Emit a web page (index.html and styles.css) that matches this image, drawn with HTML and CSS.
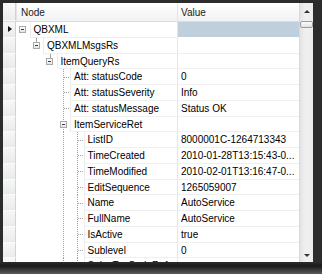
FILE: index.html
```html
<!DOCTYPE html>
<html lang="en">
<head>
    <meta charset="UTF-8">
    <title>QBXML Tree</title>
    <link rel="stylesheet" href="styles.css">
</head>
<body>
    <div class="window">
        <div class="grid">
            <div class="head">
                <div class="rowhead"></div>
                <div class="hcell node-col">Node</div>
                <div class="hcell value-col">Value</div>
            </div>

            <div class="row">
                <div class="rowhead current"><span class="arrow"></span></div>
                <div class="node-col tree">
                    <span class="guide"><span class="box"></span></span>
                    <span class="cell">QBXML</span>
                </div>
                <div class="value-col cell selected"></div>
            </div>
            <div class="row">
                <div class="rowhead"></div>
                <div class="node-col tree">
                    <span class="guide"></span>
                    <span class="guide up stub"><span class="box"></span></span>
                    <span class="cell">QBXMLMsgsRs</span>
                </div>
                <div class="value-col cell"></div>
            </div>
            <div class="row">
                <div class="rowhead"></div>
                <div class="node-col tree">
                    <span class="guide"></span>
                    <span class="guide"></span>
                    <span class="guide up stub"><span class="box"></span></span>
                    <span class="cell">ItemQueryRs</span>
                </div>
                <div class="value-col cell"></div>
            </div>
            <div class="row">
                <div class="rowhead"></div>
                <div class="node-col tree">
                    <span class="guide"></span>
                    <span class="guide"></span>
                    <span class="guide"></span>
                    <span class="guide pipe stub"></span>
                    <span class="cell">Att: statusCode</span>
                </div>
                <div class="value-col cell">0</div>
            </div>
            <div class="row">
                <div class="rowhead"></div>
                <div class="node-col tree">
                    <span class="guide"></span>
                    <span class="guide"></span>
                    <span class="guide"></span>
                    <span class="guide pipe stub"></span>
                    <span class="cell">Att: statusSeverity</span>
                </div>
                <div class="value-col cell">Info</div>
            </div>
            <div class="row">
                <div class="rowhead"></div>
                <div class="node-col tree">
                    <span class="guide"></span>
                    <span class="guide"></span>
                    <span class="guide"></span>
                    <span class="guide pipe stub"></span>
                    <span class="cell">Att: statusMessage</span>
                </div>
                <div class="value-col cell">Status OK</div>
            </div>
            <div class="row">
                <div class="rowhead"></div>
                <div class="node-col tree">
                    <span class="guide"></span>
                    <span class="guide"></span>
                    <span class="guide"></span>
                    <span class="guide pipe stub"><span class="box"></span></span>
                    <span class="cell">ItemServiceRet</span>
                </div>
                <div class="value-col cell"></div>
            </div>
            <div class="row">
                <div class="rowhead"></div>
                <div class="node-col tree">
                    <span class="guide"></span>
                    <span class="guide"></span>
                    <span class="guide"></span>
                    <span class="guide pipe"></span>
                    <span class="guide pipe stub"></span>
                    <span class="cell">ListID</span>
                </div>
                <div class="value-col cell">8000001C-1264713343</div>
            </div>
            <div class="row">
                <div class="rowhead"></div>
                <div class="node-col tree">
                    <span class="guide"></span>
                    <span class="guide"></span>
                    <span class="guide"></span>
                    <span class="guide pipe"></span>
                    <span class="guide pipe stub"></span>
                    <span class="cell">TimeCreated</span>
                </div>
                <div class="value-col cell">2010-01-28T13:15:43-0...</div>
            </div>
            <div class="row">
                <div class="rowhead"></div>
                <div class="node-col tree">
                    <span class="guide"></span>
                    <span class="guide"></span>
                    <span class="guide"></span>
                    <span class="guide pipe"></span>
                    <span class="guide pipe stub"></span>
                    <span class="cell">TimeModified</span>
                </div>
                <div class="value-col cell">2010-02-01T13:16:47-0...</div>
            </div>
            <div class="row">
                <div class="rowhead"></div>
                <div class="node-col tree">
                    <span class="guide"></span>
                    <span class="guide"></span>
                    <span class="guide"></span>
                    <span class="guide pipe"></span>
                    <span class="guide pipe stub"></span>
                    <span class="cell">EditSequence</span>
                </div>
                <div class="value-col cell">1265059007</div>
            </div>
            <div class="row">
                <div class="rowhead"></div>
                <div class="node-col tree">
                    <span class="guide"></span>
                    <span class="guide"></span>
                    <span class="guide"></span>
                    <span class="guide pipe"></span>
                    <span class="guide pipe stub"></span>
                    <span class="cell">Name</span>
                </div>
                <div class="value-col cell">AutoService</div>
            </div>
            <div class="row">
                <div class="rowhead"></div>
                <div class="node-col tree">
                    <span class="guide"></span>
                    <span class="guide"></span>
                    <span class="guide"></span>
                    <span class="guide pipe"></span>
                    <span class="guide pipe stub"></span>
                    <span class="cell">FullName</span>
                </div>
                <div class="value-col cell">AutoService</div>
            </div>
            <div class="row">
                <div class="rowhead"></div>
                <div class="node-col tree">
                    <span class="guide"></span>
                    <span class="guide"></span>
                    <span class="guide"></span>
                    <span class="guide pipe"></span>
                    <span class="guide pipe stub"></span>
                    <span class="cell">IsActive</span>
                </div>
                <div class="value-col cell">true</div>
            </div>
            <div class="row">
                <div class="rowhead"></div>
                <div class="node-col tree">
                    <span class="guide"></span>
                    <span class="guide"></span>
                    <span class="guide"></span>
                    <span class="guide pipe"></span>
                    <span class="guide pipe stub"></span>
                    <span class="cell">Sublevel</span>
                </div>
                <div class="value-col cell">0</div>
            </div>
            <div class="row">
                <div class="rowhead"></div>
                <div class="node-col tree">
                    <span class="guide"></span>
                    <span class="guide"></span>
                    <span class="guide"></span>
                    <span class="guide pipe"></span>
                    <span class="guide pipe stub"><span class="box"></span></span>
                    <span class="cell">SalesTaxCodeRef</span>
                </div>
                <div class="value-col cell"></div>
            </div>
        </div>

        <div class="scrollbar">
            <span class="scroll-up"></span>
            <span class="thumb"></span>
            <span class="track"></span>
            <span class="scroll-down"></span>
        </div>
    </div>
</body>
</html>
```

FILE: styles.css
```css
body {
    margin: 0;
    width: 322px;
    height: 274px;
    overflow: hidden;
    background: linear-gradient(to bottom, #2c2c2c 0, #2c2c2c 262px, #1a1a1a 266px, #5a5a5a 274px);
    font-family: "Liberation Sans", Arial, sans-serif;
    font-size: 10px;
    color: #000;
}
.window {
    display: flex;
    width: 310px;
    height: 259px;
    margin: 3px 0 0 3px;
    background: #fff;
    overflow: hidden;
}
.grid {
    width: 296px;
    display: flex;
    flex-direction: column;
}
.head {
    display: flex;
    height: 19px;
    flex-shrink: 0;
    background: linear-gradient(to bottom, #ffffff, #f1f2f4);
    border-bottom: 1px solid #dcdcdc;
    box-sizing: border-box;
}
.head .rowhead {
    background: linear-gradient(to bottom, #fbfbfb, #eceded);
}
.hcell {
    line-height: 19px;
    color: #222;
    box-sizing: border-box;
}
.hcell.node-col {
    padding-left: 4px;
    border-left: 1px solid #e4e4e4;
}
.hcell.value-col {
    padding-left: 3px;
    border-left: 1px solid #e4e4e4;
}
.row {
    display: flex;
    height: 15.75px;
    flex-shrink: 0;
    line-height: 15.75px;
}
.rowhead {
    width: 13px;
    flex-shrink: 0;
    box-sizing: border-box;
    background: linear-gradient(to bottom, #f7f7f7, #e9eaea);
    border-bottom: 1px solid #fafafa;
    border-right: 1px solid #d2d2d2;
    display: flex;
    align-items: center;
    justify-content: center;
}
.arrow {
    width: 0;
    height: 0;
    border-top: 3.5px solid transparent;
    border-bottom: 3.5px solid transparent;
    border-left: 4px solid #111;
    margin-left: 1px;
}
.node-col {
    width: 161px;
    flex-shrink: 0;
}
.value-col {
    flex: 1;
}
.tree {
    display: flex;
}
.guide {
    width: 13.5px;
    flex-shrink: 0;
    display: flex;
    align-items: center;
    justify-content: center;
    background-repeat: no-repeat;
}
.guide.up {
    background-image: linear-gradient(#a0a0a0, #a0a0a0);
    background-size: 1px 8px;
    background-position: 6.5px 0;
}
.guide.pipe {
    background-image: repeating-linear-gradient(to bottom, #a0a0a0 0, #a0a0a0 1px, transparent 1px, transparent 2px);
    background-size: 1px 100%;
    background-position: 6.5px 0;
}
.guide.stub::after {
    content: "";
    width: 5px;
    height: 1px;
    margin-left: 7px;
    background: repeating-linear-gradient(to right, #a0a0a0 0, #a0a0a0 1px, transparent 1px, transparent 2px);
}
.guide.stub:has(.box)::after {
    display: none;
}
.box {
    width: 7px;
    height: 7px;
    box-sizing: border-box;
    border: 1px solid #a9a9a9;
    background: linear-gradient(to bottom, #ffffff, #e4e4e4);
    display: flex;
    align-items: center;
    justify-content: center;
}
.box::before {
    content: "";
    width: 3px;
    height: 1px;
    background: #3b3b3b;
}
.cell {
    flex: 1;
    box-sizing: border-box;
    padding-left: 3px;
    border-left: 1px solid #ececec;
    border-bottom: 1px solid #f0f0f0;
    white-space: nowrap;
    overflow: hidden;
}
.value-col.cell {
    border-left-color: #e6e6e6;
    padding-left: 3px;
}
.selected {
    background: #c0cfdc;
    border-bottom-color: #fff;
}
.scrollbar {
    width: 14px;
    display: flex;
    flex-direction: column;
    align-items: center;
    background: linear-gradient(to right, #e3e3e3, #f0f0f0 40%, #ececec);
    border-left: 1px solid #dadada;
    box-sizing: border-box;
}
.scroll-up {
    margin-top: 7px;
    border-left: 3px solid transparent;
    border-right: 3px solid transparent;
    border-bottom: 3px solid #333;
}
.thumb {
    margin-top: 8px;
    width: 13px;
    height: 7px;
    box-sizing: border-box;
    border: 1px solid #9c9c9c;
    border-radius: 2px;
    background: linear-gradient(to bottom, #fdfdfd, #e0e0e0);
}
.track {
    flex: 1;
}
.scroll-down {
    margin-bottom: 5px;
    border-left: 3px solid transparent;
    border-right: 3px solid transparent;
    border-top: 3px solid #333;
}
```
